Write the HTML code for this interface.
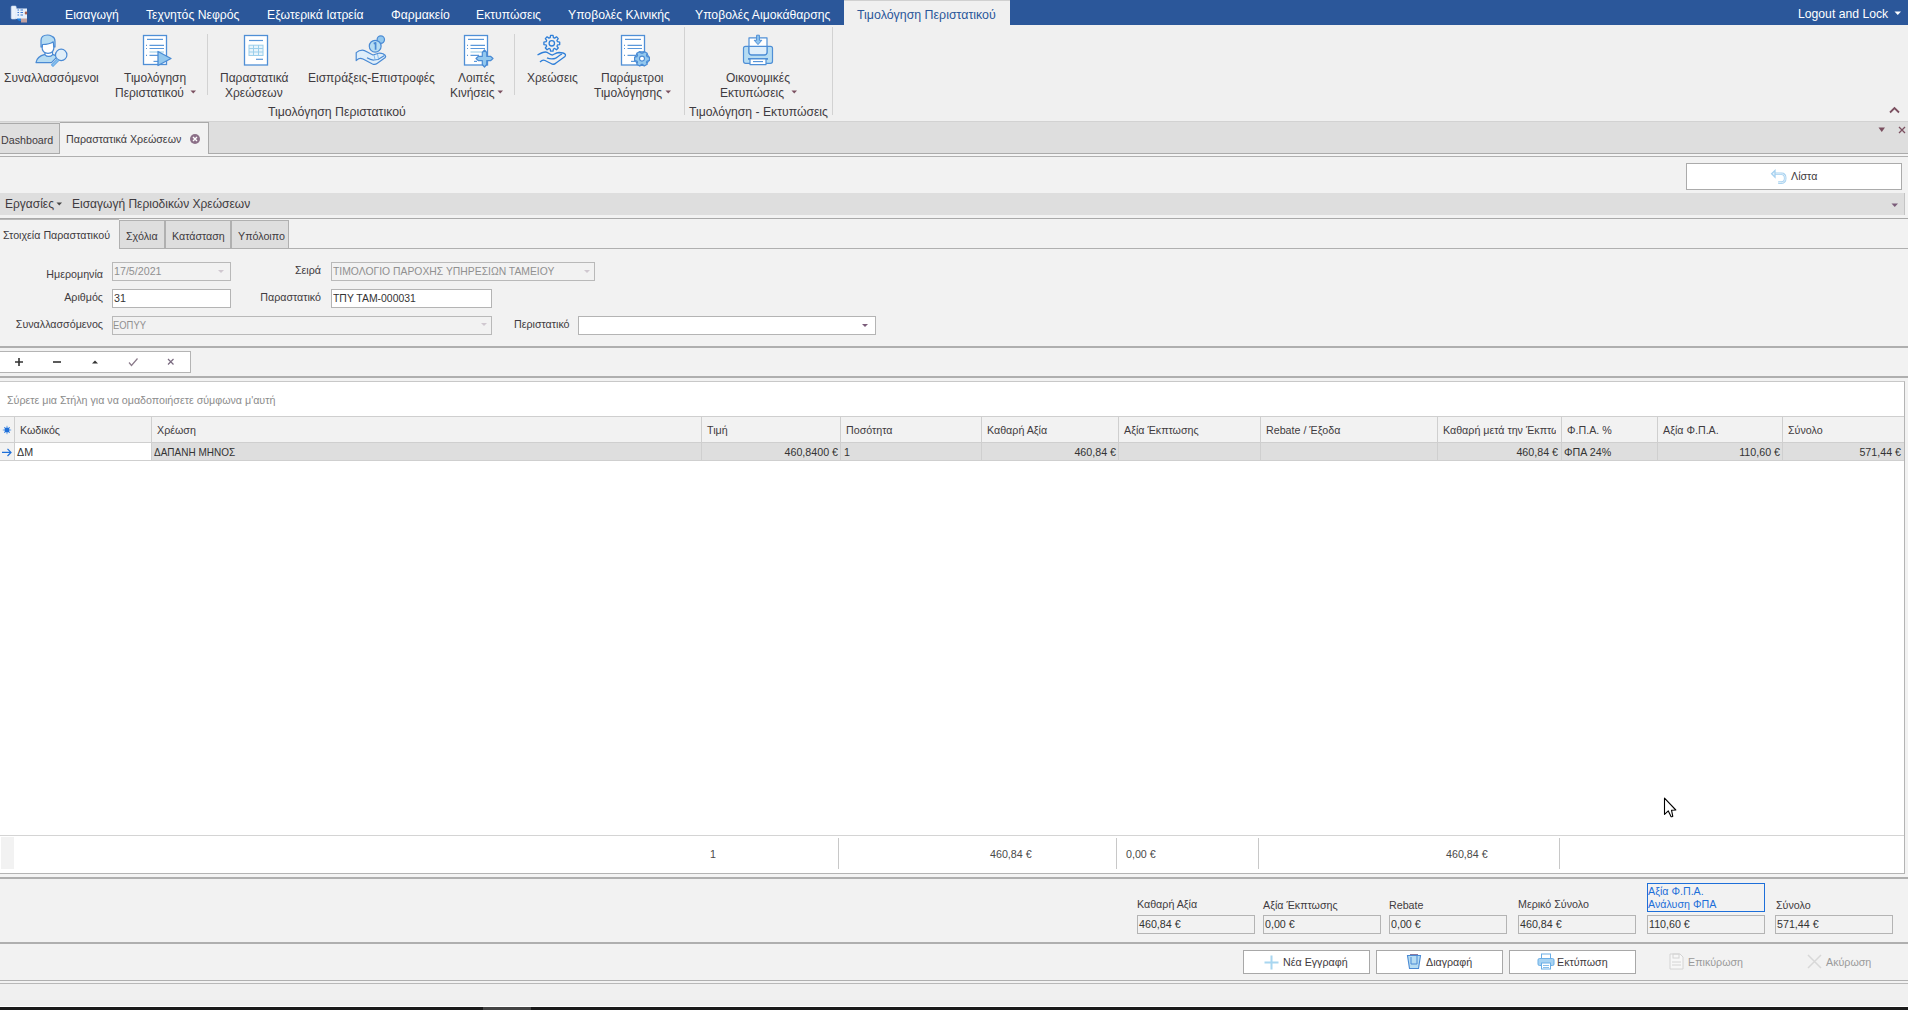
<!DOCTYPE html>
<html><head><meta charset="utf-8">
<style>
*{margin:0;padding:0;box-sizing:border-box}
html,body{width:1908px;height:1010px;overflow:hidden;background:#f2f2f2;font-family:"Liberation Sans",sans-serif;color:#3f3b40}
.a{position:absolute}
.t{position:absolute;white-space:nowrap;line-height:14px}
.s12{font-size:12px}
.s11{font-size:10.7px}
.ln{position:absolute;height:1px;background:#b3b3b3}
.vl{position:absolute;width:1px;background:#b3b3b3}
.w{color:#fff}
.box{position:absolute;border:1px solid #b4b4b4}
</style></head><body>

<!-- title bar -->
<div class="a" style="left:0;top:0;width:1908px;height:25px;background:#2b579a"></div>
<div class="a" style="left:844px;top:0;width:166px;height:25px;background:#f0f0f0;border-top:1px solid #d0d0d0"></div>
<div class="t s12 w" style="font-size:12.2px;left:65px;top:8px">Εισαγωγή</div>
<div class="t s12 w" style="font-size:12.2px;left:146px;top:8px">Τεχνητός Νεφρός</div>
<div class="t s12 w" style="font-size:12.2px;left:267px;top:8px">Εξωτερικά Ιατρεία</div>
<div class="t s12 w" style="font-size:12.2px;left:391px;top:8px">Φαρμακείο</div>
<div class="t s12 w" style="font-size:12.2px;left:476px;top:8px">Εκτυπώσεις</div>
<div class="t s12 w" style="font-size:12.2px;left:568px;top:8px">Υποβολές Κλινικής</div>
<div class="t s12 w" style="font-size:12.2px;left:695px;top:8px">Υποβολές Αιμοκάθαρσης</div>
<div class="t s12" style="left:857px;top:8px;color:#2b579a;font-size:12.4px">Τιμολόγηση Περιστατικού</div>
<div class="t s12 w" style="font-size:12.2px;left:1798px;top:7px">Logout and Lock</div>

<!-- ribbon -->
<div class="a" style="left:0;top:25px;width:1908px;height:97px;background:#f0f0f0"></div>
<div class="ln" style="left:0;top:121px;width:1908px;background:#d2d2d2"></div>

<!-- document tabs strip -->
<div class="a" style="left:0;top:122px;width:1908px;height:32px;background:#dedede"></div>
<div class="ln" style="left:0;top:153px;width:1908px;background:#ababab"></div>
<div class="a" style="left:0;top:154px;width:1908px;height:2px;background:#f4f4f4"></div>
<div class="ln" style="left:0;top:156px;width:1908px;background:#b0b0b0"></div>
<div class="a" style="left:-1px;top:123px;width:61px;height:31px;border:1px solid #aaa;background:#dfdfdf"></div>
<div class="a" style="left:60px;top:122px;width:149px;height:32px;border-top:1px solid #aaa;border-right:1px solid #aaa;background:#f2f2f2"></div>
<div class="t s11" style="left:1px;top:133px">Dashboard</div>
<div class="t s11" style="left:66px;top:132px">Παραστατικά Χρεώσεων</div>

<!-- ribbon icons -->
<svg class="a" style="left:30px;top:30px" width="44" height="40" viewBox="0 0 44 40">
 <g stroke="#4a8ad4" stroke-width="1.2" stroke-linejoin="round">
  <path d="M6 32.6 C6.5 28.5 10 25.5 15 24.3 L22.5 24.3 C24.5 24.8 26 25.5 27.3 26.6 L21.5 32.6 Z" fill="#b6dcf2"/>
  <path d="M15 21.5 L15 24.8 C17 27 20.5 27 22.5 24.8 L22.5 21.5" fill="#fff"/>
  <path d="M12 13 C12 9 14.5 7.5 18 7.5 C21.5 7.5 24 9 24 13 L24 16.5 C24 21 21.5 23.3 18 23.3 C14.5 23.3 12 21 12 16.5 Z" fill="#fff"/>
  <path d="M11 17 L11 10.5 C11 7 13.5 5 17.5 5 C20 5 21 5.8 22.5 6.6 C24 7.3 25 9 25 11.5 L25 17 L23.8 17 L23.2 11.8 C21 13.5 17.5 14.5 12.5 14.5 L12.3 17 Z" fill="#b6dcf2"/>
  <circle cx="31.2" cy="24.9" r="5.7" fill="#e0eef9"/>
  <path d="M27.4 28.9 L21.5 34.8 L23 36.3 L28.9 30.4" fill="#8cc4ee" stroke="#6aaae6"/>
 </g>
</svg>
<svg class="a" style="left:142px;top:34px" width="32" height="34" viewBox="0 0 32 34">
 <rect x="1.5" y="1.5" width="23" height="29" fill="#fff" stroke="#4f8fd6" stroke-width="1.3"/>
 <g stroke="#5b98da" stroke-width="1.2">
  <path d="M5 5.4 H21"/><path d="M7.5 11.4 H22 M7.5 14.5 H22 M7.5 21.4 H16"/><path d="M7.5 18 H22" stroke="#a6d2ea"/>
  <path d="M4 11.4 H5 M4 14.5 H5 M4 21.4 H5"/><path d="M11.5 27.4 H16"/>
 </g>
 <path d="M16 17.5 L29 24.5 L16 31.5 Z" fill="#93c8ee" stroke="#4a8bd4" stroke-width="1.3" stroke-linejoin="round"/>
</svg>
<svg class="a" style="left:243px;top:34px" width="28" height="33" viewBox="0 0 28 33">
 <rect x="1.5" y="1.5" width="23" height="29.5" fill="#fff" stroke="#4f8fd6" stroke-width="1.3"/>
 <g stroke="#5b98da" stroke-width="1.2"><path d="M6 6.5 H20"/><path d="M13 25.3 H20"/></g>
 <g stroke="#9ccfeb" stroke-width="1"><rect x="6" y="11.2" width="14" height="10.3" fill="#e8f4fb"/><path d="M10.5 11 V21.5 M15.5 11 V21.5 M6 14.5 H20 M6 18 H20"/></g>
</svg>
<svg class="a" style="left:354px;top:34px" width="34" height="33" viewBox="0 0 34 33">
 <g stroke="#4a8ad4" stroke-width="1.2" stroke-linejoin="round">
  <path d="M2.2 18.6 C4 17 6 16.2 8.5 16.2 C10.5 16.2 12 17.5 19 21 L24.5 19.3 C26 18.8 27.5 19.2 29 19.8 L31.2 21.3 C31.8 22 31.8 23 31 23.8 L23 29.5 C21.8 30.5 20 30.7 18.5 30 L9 25 C7.5 24.2 6 24 4.5 24.8 L2.2 26.6 Z" fill="#dfeefa"/>
  <path d="M13 23.8 C15.5 25.3 17.5 26.3 20 26 L24 25.5 L30.5 21.5" fill="none"/>
  <path d="M20 21 L21 25.5 M23.5 20 L24.5 25" fill="none" stroke-width=".9" stroke="#7ab4e8"/>
  <circle cx="26.8" cy="5.6" r="3.7" fill="#93c8ee"/>
  <circle cx="21.2" cy="12.2" r="5.9" fill="#b6dcf2"/>
  <path d="M19.7 9.6 L21.6 8.9 L21.6 15.8" fill="none" stroke-width="1.7"/>
 </g>
</svg>
<svg class="a" style="left:463px;top:34px" width="32" height="34" viewBox="0 0 32 34">
 <rect x="1.5" y="1.5" width="23" height="29.5" fill="#fff" stroke="#4f8fd6" stroke-width="1.3"/>
 <g stroke="#5b98da" stroke-width="1.2">
  <path d="M5 5.4 H21"/><path d="M7.5 11.4 H22 M7.5 14.5 H22 M7.5 21.4 H16"/><path d="M7.5 18 H22" stroke="#a6d2ea"/>
  <path d="M4 11.4 H5 M4 14.5 H5 M4 21.4 H5"/><path d="M11 27.4 H14"/>
 </g>
 <path d="M19.3 18.5 L21.5 16 L23.7 18.5 L23.7 22.3 L27.5 22.3 L30 24.5 L27.5 26.7 L23.7 26.7 L23.7 30.5 L21.5 33 L19.3 30.5 L19.3 26.7 L15.5 26.7 L13 24.5 L15.5 22.3 L19.3 22.3 Z" fill="#93c8ee" stroke="#4a8bd4" stroke-width="1.2" stroke-linejoin="round"/>
</svg>
<svg class="a" style="left:536px;top:34px" width="32" height="33" viewBox="0 0 32 33">
 <g fill="none" stroke="#2f7fd8" stroke-width="1.3" stroke-linejoin="round">
  <path d="M21.48 7.70 L23.70 8.05 L23.70 10.55 L21.48 10.90 L20.95 12.18 L22.27 14.00 L20.50 15.77 L18.68 14.45 L17.40 14.98 L17.05 17.20 L14.55 17.20 L14.20 14.98 L12.92 14.45 L11.10 15.77 L9.33 14.00 L10.65 12.18 L10.12 10.90 L7.90 10.55 L7.90 8.05 L10.12 7.70 L10.65 6.42 L9.33 4.60 L11.10 2.83 L12.92 4.15 L14.20 3.62 L14.55 1.40 L17.05 1.40 L17.40 3.62 L18.68 4.15 L20.50 2.83 L22.27 4.60 L20.95 6.42 Z"/>
  <circle cx="15.8" cy="9.3" r="2.7"/>
  <path d="M1.5 21 C4 19.5 6.5 18 9.5 18 C12.5 18 13.5 21 16.5 21 C18.5 20 20 18.5 23 18.5 L27 19 C29.5 19.5 30 21 29 22.5 L20 29 C18.5 30.5 16.5 30.5 15 29.5 L9 26.5 C7.5 25.8 6 26 4 28"/>
  <path d="M11 23.8 C13.5 25 16 25 19 24.5 C21 23.5 23 21.5 26 20"/>
 </g>
</svg>
<svg class="a" style="left:620px;top:34px" width="32" height="34" viewBox="0 0 32 34">
 <rect x="1.5" y="1.5" width="23" height="29.5" fill="#fff" stroke="#4f8fd6" stroke-width="1.3"/>
 <g stroke="#5b98da" stroke-width="1.2">
  <path d="M5 5.4 H21"/><path d="M7.5 11.4 H22 M7.5 14.5 H22 M7.5 21.4 H16"/><path d="M20.21 19.93 L20.57 17.85 L23.43 17.85 L23.79 19.93 L25.15 20.71 L27.13 19.98 L28.56 22.47 L26.94 23.82 L26.94 25.38 L28.56 26.73 L27.13 29.22 L25.15 28.49 L23.79 29.27 L23.43 31.35 L20.57 31.35 L20.21 29.27 L18.85 28.49 L16.87 29.22 L15.44 26.73 L17.06 25.38 L17.06 23.82 L15.44 22.47 L16.87 19.98 L18.85 20.71 Z" fill="#93c8ee" stroke="#4a8bd4" stroke-width="1.2" stroke-linejoin="round"/>
  <path d="M4 11.4 H5 M4 14.5 H5 M4 21.4 H5"/><path d="M11 27.4 H16"/>
 </g>
 <path d="M27.15 22.60 L29.40 23.06 L29.40 26.54 L27.15 27.00 L26.48 28.16 L27.20 30.34 L24.20 32.08 L22.67 30.36 L21.33 30.36 L19.80 32.08 L16.80 30.34 L17.52 28.16 L16.85 27.00 L14.60 26.54 L14.60 23.06 L16.85 22.60 L17.52 21.44 L16.80 19.26 L19.80 17.52 L21.33 19.24 L22.67 19.24 L24.20 17.52 L27.20 19.26 L26.48 21.44 Z" fill="#93c8ee" stroke="#4a8bd4" stroke-width="1.2" stroke-linejoin="round"/>
 <circle cx="22" cy="24.6" r="2.5" fill="#fff" stroke="#4a8bd4" stroke-width="1.1"/>
</svg>
<svg class="a" style="left:742px;top:34px" width="32" height="33" viewBox="0 0 32 33">
 <g stroke="#4f8fd6" stroke-width="1.2" stroke-linejoin="round">
  <rect x="1.5" y="12.3" width="29" height="17" rx="2" fill="#b6dcf2"/>
  <path d="M7 3.8 L25 3.8 L25 18.3 C25 19.8 24 20.8 22.5 20.8 L9.5 20.8 C8 20.8 7 19.8 7 18.3 Z" fill="#fff"/>
  <path d="M7 12.3 L25 12.3 L25 18.3 C25 19.8 24 20.8 22.5 20.8 L9.5 20.8 C8 20.8 7 19.8 7 18.3 Z" fill="#dfeefa"/>
  <path d="M14.6 1.2 L17.4 1.2 L17.4 6.3 L19.8 6.3 L16 10.6 L12.2 6.3 L14.6 6.3 Z" fill="#8fc4ee" stroke-width="1"/>
  <path d="M6 24.9 L26 24.9" stroke-width="1.8"/>
  <rect x="8" y="25" width="16" height="5.6" fill="#fff"/>
  <path d="M11 27.6 L21 27.6" stroke-width="1.1"/>
 </g>
</svg>

<!-- ribbon separators -->
<div class="vl" style="left:207px;top:34px;height:61px;background:#d2d2d2"></div>
<div class="vl" style="left:514px;top:34px;height:61px;background:#d2d2d2"></div>
<div class="vl" style="left:684px;top:27px;height:88px;background:#d2d2d2"></div>
<div class="vl" style="left:832px;top:27px;height:88px;background:#d2d2d2"></div>

<!-- ribbon labels -->
<div class="t s12" style="left:4px;top:71px">Συναλλασσόμενοι</div>
<div class="t s12" style="left:124px;top:71px">Τιμολόγηση</div>
<div class="t s12" style="left:115px;top:86px">Περιστατικού</div>
<div class="t s12" style="left:220px;top:71px">Παραστατικά</div>
<div class="t s12" style="left:225px;top:86px">Χρεώσεων</div>
<div class="t s12" style="left:308px;top:71px">Εισπράξεις-Επιστροφές</div>
<div class="t s12" style="left:458px;top:71px">Λοιπές</div>
<div class="t s12" style="left:450px;top:86px">Κινήσεις</div>
<div class="t s12" style="left:527px;top:71px">Χρεώσεις</div>
<div class="t s12" style="left:601px;top:71px">Παράμετροι</div>
<div class="t s12" style="left:594px;top:86px">Τιμολόγησης</div>
<div class="t s12" style="left:726px;top:71px">Οικονομικές</div>
<div class="t s12" style="left:720px;top:86px">Εκτυπώσεις</div>
<div class="t s12" style="left:268px;top:105px;font-size:12.3px">Τιμολόγηση Περιστατικού</div>
<div class="t s12" style="left:689px;top:105px;font-size:12.2px">Τιμολόγηση - Εκτυπώσεις</div>
<svg class="a" style="left:190px;top:90px" width="7" height="5"><path d="M0.5 0.5 H6 L3.25 3.5Z" fill="#7b5060"/></svg>
<svg class="a" style="left:497px;top:90px" width="7" height="5"><path d="M0.5 0.5 H6 L3.25 3.5Z" fill="#7b5060"/></svg>
<svg class="a" style="left:665px;top:90px" width="7" height="5"><path d="M0.5 0.5 H6 L3.25 3.5Z" fill="#7b5060"/></svg>
<svg class="a" style="left:791px;top:90px" width="7" height="5"><path d="M0.5 0.5 H6 L3.25 3.5Z" fill="#7b5060"/></svg>
<!-- logo -->
<svg class="a" style="left:10px;top:4px" width="20" height="19" viewBox="0 0 20 19">
 <rect x="1.2" y="2" width="5" height="13" rx="1" fill="#eaf2fb" stroke="#c8d8ee" stroke-width=".6"/>
 <rect x="6" y="4.5" width="11" height="10.5" fill="#e6f0fb"/>
 <path d="M7.5 6 H9 M10.5 6 H13 M7.5 8.5 H9 M10.5 8.5 H13 M7.5 11 H9 M10.5 11 H13" stroke="#3b78d0" stroke-width="1"/>
 <path d="M14.5 9 L16 7 L17.5 9 L16 11 Z" fill="#a45a4a"/>
 <path d="M6.5 14.5 L11 14.5 L11 17 L9 17 Z" fill="#1f7fe0"/>
 <rect x="11" y="14.5" width="6" height="4" fill="#c0a0a0"/>
</svg>
<!-- logout arrow and ribbon chevrons -->
<svg class="a" style="left:1894px;top:11px" width="8" height="5"><path d="M0.5 0.5 H7 L3.75 4Z" fill="#fff"/></svg>
<svg class="a" style="left:1889px;top:106px" width="11" height="8"><path d="M1 6.5 L5.5 2 L10 6.5" fill="none" stroke="#7b5060" stroke-width="1.8"/></svg>
<svg class="a" style="left:1878px;top:127px" width="8" height="6"><path d="M0.5 0.5 H7 L3.75 5Z" fill="#7b5060"/></svg>
<svg class="a" style="left:1898px;top:126px" width="8" height="8"><path d="M1 1 L7 7 M7 1 L1 7" stroke="#7b5060" stroke-width="1.3"/></svg>
<svg class="a" style="left:189px;top:133px" width="12" height="12"><circle cx="6" cy="6" r="5" fill="#8c7088"/><path d="M4 4 L8 8 M8 4 L4 8" stroke="#fff" stroke-width="1.4"/></svg>

<!-- Lista button -->
<div class="a" style="left:1686px;top:163px;width:216px;height:27px;background:#fff;border:1px solid #ababab"></div>
<svg class="a" style="left:1770px;top:169px" width="18" height="16" viewBox="0 0 18 16">
 <g fill="none" stroke-linejoin="miter">
 <path d="M4.5 4.8 H11.5 C14.2 4.8 15.2 6.8 15.2 9.3 C15.2 12 14 13.6 11.5 13.6 H8.2" stroke="#a6d1f0" stroke-width="2.6"/>
 <path d="M4.5 4.8 H11.5 C14.2 4.8 15.2 6.8 15.2 9.3 C15.2 12 14 13.6 11.5 13.6 H8.2" stroke="#e8f3fb" stroke-width="0.9"/>
 <path d="M5 1.5 L1.6 4.8 L5 8.1 Z" fill="#e8f3fb" stroke="#a6d1f0" stroke-width="1.3"/>
 </g>
</svg>
<div class="t s11" style="left:1791px;top:169px">Λίστα</div>

<!-- toolbar strip -->
<div class="a" style="left:0;top:193px;width:1905px;height:22px;background:#dedede;border-right:1px solid #c4c4c4"></div>
<div class="t s12" style="left:5px;top:197px">Εργασίες</div>
<svg class="a" style="left:56px;top:202px" width="7" height="5"><path d="M0.5 0.5 H6 L3.25 3.5Z" fill="#444"/></svg>
<div class="t s12" style="left:72px;top:197px">Εισαγωγή Περιοδικών Χρεώσεων</div>
<svg class="a" style="left:1891px;top:203px" width="8" height="5"><path d="M0.5 0.5 H7 L3.75 4Z" fill="#7b5c7a"/></svg>
<div class="ln" style="left:0;top:218px;width:1908px;background:#a9a9a9"></div>

<!-- inner tabs -->
<div class="ln" style="left:0;top:219px;width:119px;background:#b8b8b8"></div>
<div class="ln" style="left:119px;top:248px;width:1789px;background:#b0b0b0"></div>
<div class="a" style="left:119px;top:220px;width:46px;height:29px;background:#dedede;border:1px solid #b0b0b0"></div>
<div class="a" style="left:165px;top:220px;width:66px;height:29px;background:#dedede;border:1px solid #b0b0b0"></div>
<div class="a" style="left:231px;top:220px;width:58px;height:29px;background:#dedede;border:1px solid #b0b0b0"></div>
<div class="t s11" style="left:3px;top:228px">Στοιχεία Παραστατικού</div>
<div class="t s11" style="left:126px;top:229px">Σχόλια</div>
<div class="t s11" style="left:172px;top:229px">Κατάσταση</div>
<div class="t s11" style="left:238px;top:229px">Υπόλοιπο</div>

<!-- form -->
<div class="t s11" style="right:1805px;top:267px">Ημερομηνία</div>
<div class="a" style="left:112px;top:262px;width:119px;height:19px;border:1px solid #b9b9b9"></div>
<div class="t s11" style="left:114px;top:264px;color:#909090">17/5/2021</div>
<svg class="a" style="left:218px;top:270px" width="7" height="4"><path d="M0 0 H6 L3 3Z" fill="#d0c8d0"/></svg>
<div class="t s11" style="right:1805px;top:290px">Αριθμός</div>
<div class="a" style="left:112px;top:289px;width:119px;height:19px;border:1px solid #b4b4b4;background:#fff"></div>
<div class="t s11" style="left:114px;top:291px;color:#333">31</div>
<div class="t s11" style="right:1805px;top:317px">Συναλλασσόμενος</div>
<div class="a" style="left:112px;top:316px;width:380px;height:19px;border:1px solid #b9b9b9"></div>
<div class="t s11" style="left:113px;top:318px;color:#909090;transform:scaleX(0.88);transform-origin:0 0">ΕΟΠΥΥ</div>
<svg class="a" style="left:481px;top:323px" width="7" height="4"><path d="M0 0 H6 L3 3Z" fill="#d0c8d0"/></svg>

<div class="t s11" style="right:1587px;top:263px">Σειρά</div>
<div class="a" style="left:331px;top:262px;width:264px;height:19px;border:1px solid #b9b9b9"></div>
<div class="t s11" style="left:333px;top:264px;color:#909090;transform:scaleX(0.97);transform-origin:0 0">ΤΙΜΟΛΟΓΙΟ ΠΑΡΟΧΗΣ ΥΠΗΡΕΣΙΩΝ ΤΑΜΕΙΟΥ</div>
<svg class="a" style="left:584px;top:270px" width="7" height="4"><path d="M0 0 H6 L3 3Z" fill="#d0c8d0"/></svg>
<div class="t s11" style="right:1587px;top:290px">Παραστατικό</div>
<div class="a" style="left:331px;top:289px;width:161px;height:19px;border:1px solid #b4b4b4;background:#fff"></div>
<div class="t s11" style="left:333px;top:291px;color:#333;transform:scaleX(0.975);transform-origin:0 0">ΤΠΥ ΤΑΜ-000031</div>
<div class="t s11" style="left:514px;top:317px">Περιστατικό</div>
<div class="a" style="left:578px;top:316px;width:298px;height:19px;border:1px solid #b4b4b4;background:#fff"></div>
<svg class="a" style="left:862px;top:324px" width="7" height="4"><path d="M0 0 H6 L3 3Z" fill="#7b5c7a"/></svg>

<div class="a" style="left:0;top:346px;width:1908px;height:2px;background:#afafaf"></div>

<!-- grid navigator -->
<div class="a" style="left:-1px;top:351px;width:192px;height:22px;background:#fff;border:1px solid #b4b4b4"></div>
<svg class="a" style="left:13px;top:356px" width="170" height="12" viewBox="0 0 170 12">
 <path d="M6 2 V10 M2 6 H10" stroke="#333" stroke-width="1.6"/>
 <path d="M40 6 H48" stroke="#333" stroke-width="1.6"/>
 <path d="M79 7.5 L82 4.5 L85 7.5 Z" fill="#333"/>
 <path d="M116 6.5 L118.5 9.5 L124.5 2.5" fill="none" stroke="#8a7a8a" stroke-width="1.2"/>
 <path d="M155 3 L160.5 8.5 M160.5 3 L155 8.5" stroke="#7a6a80" stroke-width="1.2"/>
</svg>
<div class="a" style="left:0;top:376px;width:1908px;height:2px;background:#afafaf"></div>

<!-- grid -->
<div class="a" style="left:0;top:381px;width:1905px;height:493px;background:#fff;border-top:1px solid #c8c8c8;border-right:1px solid #b4b4b4;border-bottom:1px solid #b4b4b4"></div>
<div class="t s11" style="left:7px;top:393px;color:#8c8c8c">Σύρετε μια Στήλη για να ομαδοποιήσετε σύμφωνα μ'αυτή</div>
<div class="a" style="left:0;top:416px;width:1904px;height:27px;background:#f2f2f2;border-top:1px solid #cfcfcf;border-bottom:1px solid #cfcfcf"></div>
<div class="a" style="left:0;top:443px;width:1904px;height:18px;background:#dedede;border-bottom:1px solid #cfcfcf"></div>
<div class="a" style="left:15px;top:443px;width:136px;height:17px;background:#fff"></div>
<div class="a" style="left:0;top:443px;width:14px;height:17px;background:#f2f2f2"></div>

<div class="vl" style="left:14px;top:417px;height:44px;background:#cfcfcf"></div>
<div class="vl" style="left:151px;top:417px;height:44px;background:#cfcfcf"></div>
<div class="vl" style="left:701px;top:417px;height:44px;background:#cfcfcf"></div>
<div class="vl" style="left:840px;top:417px;height:44px;background:#cfcfcf"></div>
<div class="vl" style="left:981px;top:417px;height:44px;background:#cfcfcf"></div>
<div class="vl" style="left:1118px;top:417px;height:44px;background:#cfcfcf"></div>
<div class="vl" style="left:1260px;top:417px;height:44px;background:#cfcfcf"></div>
<div class="vl" style="left:1437px;top:417px;height:44px;background:#cfcfcf"></div>
<div class="vl" style="left:1561px;top:417px;height:44px;background:#cfcfcf"></div>
<div class="vl" style="left:1657px;top:417px;height:44px;background:#cfcfcf"></div>
<div class="vl" style="left:1782px;top:417px;height:44px;background:#cfcfcf"></div>
<div class="t s11" style="left:20px;top:423px">Κωδικός</div>
<div class="t s11" style="left:157px;top:423px">Χρέωση</div>
<div class="t s11" style="left:707px;top:423px">Τιμή</div>
<div class="t s11" style="left:846px;top:423px">Ποσότητα</div>
<div class="t s11" style="left:987px;top:423px">Καθαρή Αξία</div>
<div class="t s11" style="left:1124px;top:423px">Αξία Έκπτωσης</div>
<div class="t s11" style="left:1266px;top:423px">Rebate / Έξοδα</div>
<div class="t s11" style="left:1567px;top:423px">Φ.Π.Α. %</div>
<div class="t s11" style="left:1663px;top:423px">Αξία Φ.Π.Α.</div>
<div class="t s11" style="left:1788px;top:423px">Σύνολο</div>
<div class="t s11" style="left:1443px;top:423px;width:113px;overflow:hidden">Καθαρή μετά την Έκπτωση</div>
<svg class="a" style="left:2px;top:425px" width="10" height="10" viewBox="0 0 10 10"><path d="M5 0.8 V9.2 M0.8 5 H9.2 M2 2 L8 8 M8 2 L2 8" stroke="#5a9ae6" stroke-width="0.9"/><rect x="2.7" y="2.7" width="4.6" height="4.6" fill="#1e6fd9"/></svg>
<svg class="a" style="left:1px;top:447px" width="11" height="10" viewBox="0 0 11 10"><path d="M1 5.4 H10 M6.5 1.8 L10 5.4 L6.5 9" fill="none" stroke="#1e6fd9" stroke-width="1.2"/></svg>
<div class="t s11" style="left:17px;top:445px;color:#333">ΔΜ</div>
<div class="t s11" style="left:154px;top:445px;color:#333;transform:scaleX(0.935);transform-origin:0 0">ΔΑΠΑΝΗ ΜΗΝΟΣ</div>
<div class="t s11" style="right:1070px;top:445px;color:#333">460,8400 €</div>
<div class="t s11" style="left:844px;top:445px;color:#333">1</div>
<div class="t s11" style="right:792px;top:445px;color:#333">460,84 €</div>
<div class="t s11" style="right:350px;top:445px;color:#333">460,84 €</div>
<div class="t s11" style="left:1564px;top:445px;color:#333">ΦΠΑ 24%</div>
<div class="t s11" style="right:128px;top:445px;color:#333">110,60 €</div>
<div class="t s11" style="right:7px;top:445px;color:#333">571,44 €</div>
<div class="ln" style="left:0;top:835px;width:1904px;background:#d4d4d4"></div>
<div class="a" style="left:1px;top:837px;width:13px;height:32px;background:#f2f2f2"></div>
<div class="vl" style="left:838px;top:838px;height:31px;background:#c8c8c8"></div>
<div class="vl" style="left:1116px;top:838px;height:31px;background:#c8c8c8"></div>
<div class="vl" style="left:1258px;top:838px;height:31px;background:#c8c8c8"></div>
<div class="vl" style="left:1559px;top:838px;height:31px;background:#c8c8c8"></div>
<div class="t s11" style="left:710px;top:847px;color:#4a4a4a">1</div>
<div class="t s11" style="left:990px;top:847px;color:#4a4a4a">460,84 €</div>
<div class="t s11" style="left:1126px;top:847px;color:#4a4a4a">0,00 €</div>
<div class="t s11" style="left:1446px;top:847px;color:#4a4a4a">460,84 €</div>
<div class="a" style="left:0;top:874px;width:1908px;height:3px;background:#f4f4f4"></div>
<div class="a" style="left:0;top:877px;width:1908px;height:2px;background:#afafaf"></div>
<div class="t s11" style="left:1137px;top:897px">Καθαρή Αξία</div>
<div class="a" style="left:1137px;top:915px;width:118px;height:19px;border:1px solid #b4b4b4"></div>
<div class="t s11" style="left:1139px;top:917px;color:#333">460,84 €</div>
<div class="t s11" style="left:1263px;top:898px">Αξία Έκπτωσης</div>
<div class="a" style="left:1263px;top:915px;width:118px;height:19px;border:1px solid #b4b4b4"></div>
<div class="t s11" style="left:1265px;top:917px;color:#333">0,00 €</div>
<div class="t s11" style="left:1389px;top:898px">Rebate</div>
<div class="a" style="left:1389px;top:915px;width:118px;height:19px;border:1px solid #b4b4b4"></div>
<div class="t s11" style="left:1391px;top:917px;color:#333">0,00 €</div>
<div class="t s11" style="left:1518px;top:897px">Μερικό Σύνολο</div>
<div class="a" style="left:1518px;top:915px;width:118px;height:19px;border:1px solid #b4b4b4"></div>
<div class="t s11" style="left:1520px;top:917px;color:#333">460,84 €</div>
<div class="a" style="left:1647px;top:915px;width:118px;height:19px;border:1px solid #b4b4b4"></div>
<div class="t s11" style="left:1649px;top:917px;color:#333">110,60 €</div>
<div class="t s11" style="left:1776px;top:898px">Σύνολο</div>
<div class="a" style="left:1775px;top:915px;width:118px;height:19px;border:1px solid #b4b4b4"></div>
<div class="t s11" style="left:1777px;top:917px;color:#333">571,44 €</div>
<div class="a" style="left:1647px;top:883px;width:118px;height:29px;border:1px solid #1e6fd9"></div>
<div class="t s11" style="left:1648px;top:884px;color:#1e6fd9">Αξία Φ.Π.Α.</div>
<div class="t s11" style="left:1648px;top:897px;color:#1e6fd9">Ανάλυση ΦΠΑ</div>
<div class="a" style="left:0;top:942px;width:1908px;height:2px;background:#afafaf"></div>
<div class="a" style="left:1243px;top:950px;width:127px;height:24px;background:#fff;border:1px solid #a8a8a8"></div>
<div class="a" style="left:1376px;top:950px;width:127px;height:24px;background:#fff;border:1px solid #a8a8a8"></div>
<div class="a" style="left:1509px;top:950px;width:127px;height:24px;background:#fff;border:1px solid #a8a8a8"></div>
<div class="t s11" style="left:1283px;top:955px">Νέα Εγγραφή</div>
<div class="t s11" style="left:1426px;top:955px">Διαγραφή</div>
<div class="t s11" style="left:1557px;top:955px">Εκτύπωση</div>
<div class="t s11" style="left:1688px;top:955px;color:#9a9a9a">Επικύρωση</div>
<div class="t s11" style="left:1826px;top:955px;color:#9a9a9a">Ακύρωση</div>
<svg class="a" style="left:1264px;top:955px" width="15" height="15" viewBox="0 0 15 15"><path d="M7.5 0.5 V14.5 M0.5 7.5 H14.5" stroke="#a8d6f0" stroke-width="2"/></svg>
<svg class="a" style="left:1406px;top:953px" width="16" height="17" viewBox="0 0 16 17"><path d="M1.5 2.5 H14.5 L12.5 15.5 H3.5 Z" fill="#b6dcf2" stroke="#4a8ad4" stroke-width="1.1"/><path d="M5 4 V11 H11 V3" fill="none" stroke="#4a8ad4" stroke-width="1"/><path d="M4 1.5 H12" stroke="#8a7aa0" stroke-width="1"/></svg>
<svg class="a" style="left:1537px;top:953px" width="18" height="17" viewBox="0 0 18 17"><rect x="4.5" y="1" width="9" height="5" fill="#fff" stroke="#6aaee6"/><rect x="1" y="5.5" width="16" height="7" rx="1.5" fill="#a6d2f2" stroke="#6aaee6"/><rect x="4.5" y="10" width="9" height="6" fill="#fff" stroke="#6aaee6"/><path d="M6 12.5 H12 M6 14.5 H12" stroke="#6aaee6" stroke-width=".8"/></svg>
<svg class="a" style="left:1669px;top:953px" width="15" height="17" viewBox="0 0 15 17"><path d="M1 1 H11 L14 4 V16 H1 Z" fill="#f7f7f7" stroke="#d4d4d4"/><rect x="4" y="1" width="6" height="4" fill="none" stroke="#d4d4d4"/><path d="M3 9 H12 M3 12 H12" stroke="#d4d4d4"/></svg>
<svg class="a" style="left:1807px;top:954px" width="15" height="15" viewBox="0 0 15 15"><path d="M1 1 L14 14 M14 1 L1 14" stroke="#d8d8d8" stroke-width="1.5"/></svg>
<div class="ln" style="left:0;top:980px;width:1908px;background:#b0b0b0"></div>
<div class="ln" style="left:0;top:983px;width:1908px;background:#b8b8b8"></div>
<div class="a" style="left:0;top:984px;width:1908px;height:22px;background:#f0f0f0"></div>
<div class="a" style="left:0;top:1006px;width:1908px;height:1px;background:#fff"></div>
<div class="a" style="left:0;top:1007px;width:1908px;height:3px;background:#1b1b1b"></div>
<div class="a" style="left:483px;top:1007px;width:48px;height:3px;background:#444"></div>

<svg class="a" style="left:1663px;top:797px" width="16" height="22" viewBox="0 0 16 22"><path d="M1.5 1.2 L1.5 17.4 L5.3 13.9 L8 19.6 C8.3 20 9.5 19.8 9.8 19.3 L8.5 13.2 L12.8 13 Z" fill="#fff" stroke="#000" stroke-width="1.1" stroke-linejoin="round"/></svg>
</body></html>
